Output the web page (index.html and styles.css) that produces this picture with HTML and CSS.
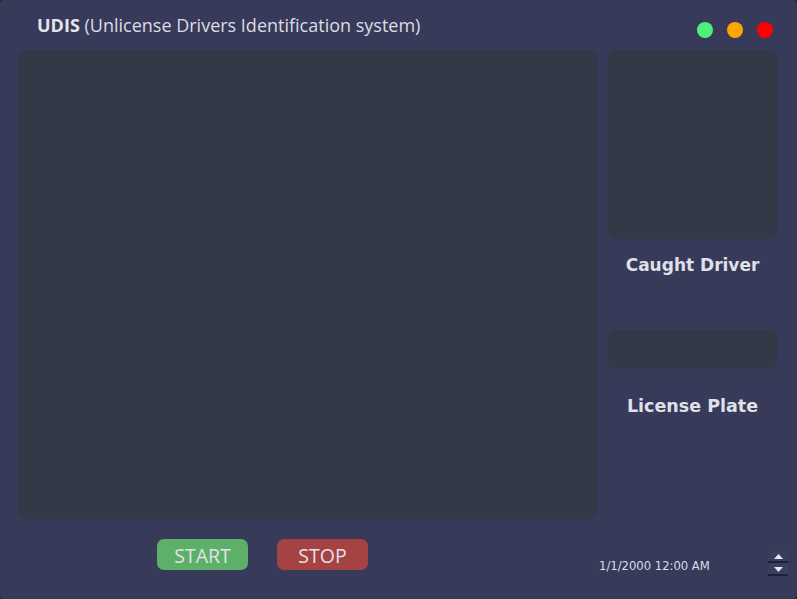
FILE: index.html
```html
<!DOCTYPE html>
<html>
<head>
<meta charset="utf-8">
<link rel="stylesheet" href="styles.css">
</head>
<body>
<div class="window">
  <header class="titlebar">
    <div class="title"><b>UDIS</b> (Unlicense Drivers Identification system)</div>
    <div class="dots">
      <span class="dot green"></span>
      <span class="dot orange"></span>
      <span class="dot red"></span>
    </div>
  </header>
  <main class="content">
    <div class="video"></div>
    <aside class="side">
      <div class="photo"></div>
      <div class="label caught">Caught Driver</div>
      <div class="plate"></div>
      <div class="label plate-label">License Plate</div>
    </aside>
  </main>
  <footer class="bottom">
    <div class="buttons">
      <button class="btn start">START</button>
      <button class="btn stop">STOP</button>
    </div>
    <div class="date">1/1/2000 12:00 AM</div>
    <div class="spin">
      <span class="spin-btn"><svg width="9" height="5" viewBox="0 0 9 5"><path d="M0 5 L4.5 0 L9 5 Z" fill="#e6e6ee"/></svg></span>
      <span class="spin-btn"><svg width="9" height="5" viewBox="0 0 9 5"><path d="M0 0 L4.5 5 L9 0 Z" fill="#e6e6ee"/></svg></span>
    </div>
  </footer>
</div>
</body>
</html>
```
FILE: styles.css
```css
* { box-sizing: border-box; }
html, body { margin: 0; padding: 0; background: #2b2c3a; }
.window {
  width: 797px;
  height: 599px;
  background: #383a59;
  border-radius: 5px;
  overflow: hidden;
  display: flex;
  flex-direction: column;
  font-family: "Open Sans", "DejaVu Sans", sans-serif;
  color: #e2e2ea;
}
.titlebar {
  height: 50px;
  display: flex;
  align-items: flex-start;
  justify-content: space-between;
  padding: 12px 24px 0 37px;
}
.title {
  font-size: 18px;
  line-height: 26px;
  color: #dcdde6;
}
.title b { font-weight: 700; color: #e4e4ec; }
.dots {
  display: flex;
  gap: 14px;
  padding-top: 10px;
}
.dot {
  width: 16px;
  height: 16px;
  border-radius: 50%;
  display: block;
}
.green { background: #4ff07a; }
.orange { background: #ffa500; }
.red { background: #ff0000; }
.content {
  display: flex;
  gap: 11px;
  padding-left: 18px;
  height: 469px;
}
.video {
  width: 579px;
  height: 469px;
  background: #343947;
  border-radius: 8px;
}
.side {
  width: 169px;
  display: flex;
  flex-direction: column;
}
.photo {
  height: 189px;
  background: #343947;
  border-radius: 8px;
}
.plate {
  height: 39px;
  background: #343947;
  border-radius: 8px;
}
.label {
  font-family: "DejaVu Sans", Verdana, sans-serif;
  font-weight: 700;
  font-size: 17px;
  text-align: center;
  color: #dfe0e8;
  line-height: 24px;
}
.caught { margin: 14px 0 53px; }
.plate-label { margin-top: 25px; font-size: 17.5px; }
.bottom {
  flex: 1;
  display: flex;
  align-items: flex-start;
  padding-top: 20px;
}
.buttons {
  display: flex;
  gap: 29px;
  padding-left: 157px;
  width: 599px;
}
.btn {
  width: 91px;
  height: 31px;
  border: none;
  border-radius: 7px;
  font-family: "Open Sans", sans-serif;
  font-size: 19.5px;
  color: #e2e2ea;
  padding: 3px 0 0;
  line-height: 28px;
}
.start { background: #5cb067; }
.stop { background: #a54343; }
.date {
  font-family: "DejaVu Sans", Tahoma, sans-serif;
  font-size: 11.6px;
  margin-top: 20px;
  width: 169px;
  color: #dcdde6;
}
.spin {
  display: flex;
  flex-direction: column;
  gap: 1px;
  margin-top: 12px;
}
.spin-btn {
  width: 20px;
  height: 12px;
  background: #3b3e5e;
  border-bottom: 2px solid #1f2033;
  display: flex;
  align-items: center;
  justify-content: center;
}
```
